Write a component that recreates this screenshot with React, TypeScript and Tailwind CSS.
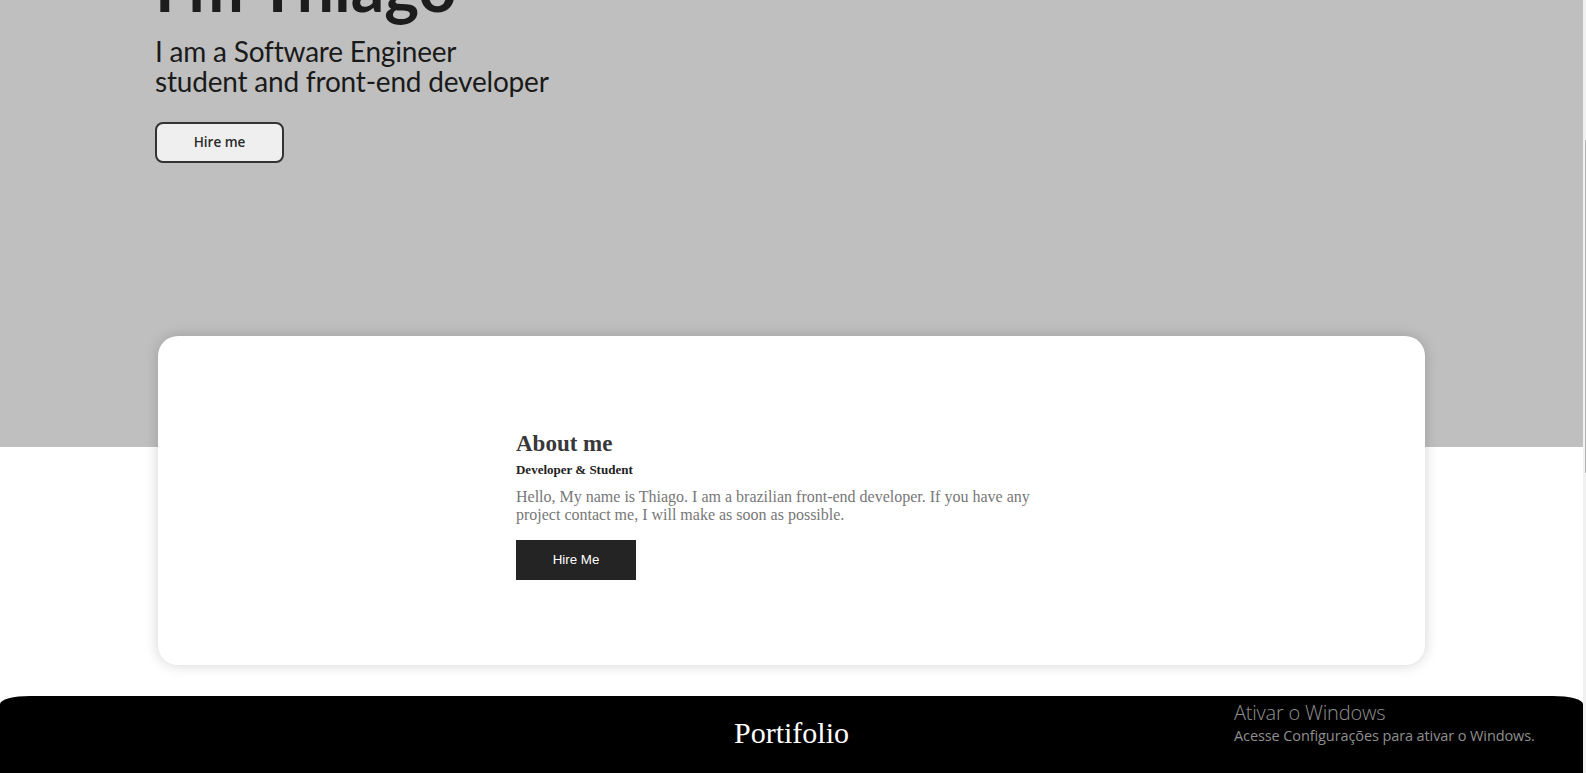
import React from "react";

export default function App() {
  return (
    <div className="relative flex h-[773px] w-full overflow-hidden bg-white">
      <main className="flex min-w-0 flex-1 flex-col">
        {/* Hero */}
        <section className="h-[447px] shrink-0 bg-[#bfbfbf] pl-[155px] text-[#1c1c1c]">
          <h1 className="mt-[-46px] font-['Lato',sans-serif] text-[66px] leading-[66px] font-bold">
            I&apos;m Thiago
          </h1>
          <p className="mt-[17px] font-['Lato',sans-serif] text-[28px] leading-[29.5px] tracking-[-0.2px] text-[#1a1a1a]">
            I am a Software Engineer
            <br />
            student and front-end developer
          </p>
          <button className="mt-[26px] h-[41px] w-[129px] rounded-[8px] border-2 border-[#333] bg-[#efefef] font-['Open_Sans',sans-serif] text-[13.5px] font-semibold text-[#2a2a2a]">
            Hire me
          </button>
        </section>

        {/* About card */}
        <section className="relative z-10 mx-auto mt-[-111px] h-[329px] w-[80%] shrink-0 rounded-[20px] bg-white pt-[95px] shadow-[0_0_14px_rgba(0,0,0,0.18)]">
          <div className="mx-auto w-[551px] font-['Liberation_Serif',serif]">
            <h2 className="text-[23px] leading-[26px] font-bold text-[#383838]">About me</h2>
            <h3 className="mt-[5px] text-[13px] leading-[16px] font-bold text-[#222]">
              Developer &amp; Student
            </h3>
            <p className="mt-[10px] text-[16px] leading-[18px] text-[#777]">
              Hello, My name is Thiago. I am a brazilian front-end developer. If you have any project
              contact me, I will make as soon as possible.
            </p>
            <button className="mt-[16px] h-[40px] w-[120px] bg-[#242424] font-['Liberation_Sans',sans-serif] text-[13.333px] text-white">
              Hire Me
            </button>
          </div>
        </section>

        {/* Footer */}
        <footer className="mt-[31px] flex-1 rounded-tl-[30px_8px] rounded-tr-[30px_8px] bg-black pt-[20px] text-center">
          <h2 className="font-['Liberation_Serif',serif] text-[30px] leading-[34px] text-white">Portifolio</h2>
        </footer>
      </main>

      {/* scrollbar strip */}
      <div className="relative w-[3px] shrink-0 bg-[#f1f1f1]">
        <div className="absolute top-[140px] right-0 h-[333px] w-[1px] bg-[#b5b5b5]" />
      </div>

      {/* Windows activation watermark */}
      <div className="pointer-events-none absolute top-[700px] left-[1234px] font-['Open_Sans',sans-serif] text-[#8f8f8f]">
        <div className="text-[20px] leading-[26px] font-light tracking-[-0.2px]">Ativar o Windows</div>
        <div className="text-[14.5px] leading-[20px] tracking-[-0.1px]">
          Acesse Configurações para ativar o Windows.
        </div>
      </div>
    </div>
  );
}
